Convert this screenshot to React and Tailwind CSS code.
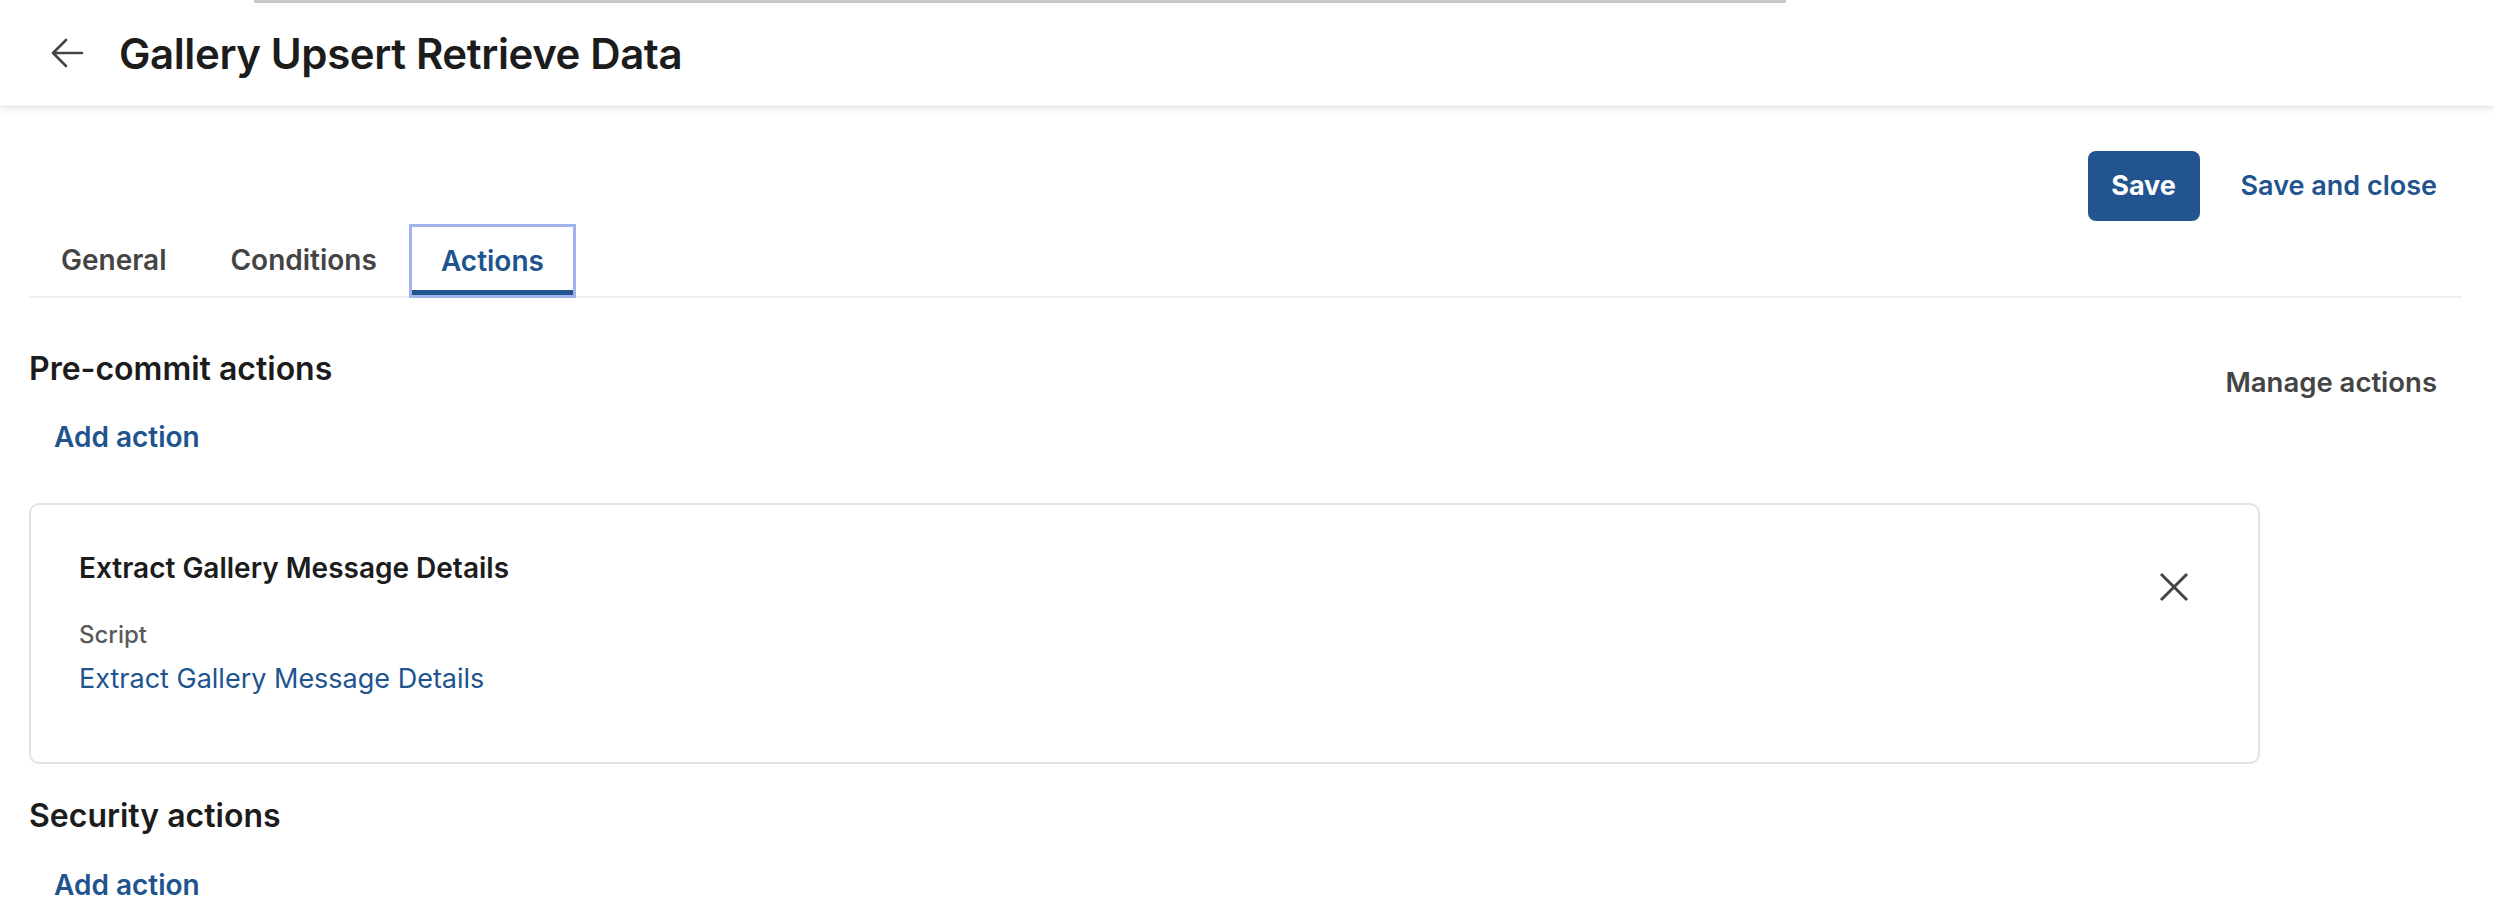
import { useState } from 'react';

function AddAction() {
  return (
    <button className="ml-[25px] text-[28px] font-semibold text-[#21538f] leading-none">Add action</button>
  );
}

export default function App() {
  const [onglet, setOnglet] = useState('Actions');
  const onglets = ['General', 'Conditions', 'Actions'];

  return (
    <div className="min-h-[922px] bg-white text-[#1c1c1c] font-['Inter',sans-serif]">
      <header className="relative h-[107px] flex items-center shadow-[0_3px_6px_rgba(0,0,0,0.08)] border-b border-[#e6e6e6]">
        <div className="absolute top-0 left-[254px] w-[1532px] h-[3px] bg-[#c8c8c8]" />
        <button className="ml-[50px] text-[#444]">
          <svg width="34" height="32" viewBox="0 0 34 32" fill="none" stroke="currentColor" strokeWidth="2.6" strokeLinecap="round" strokeLinejoin="round">
            <path d="M32 16H3M16 3L3 16l13 13" />
          </svg>
        </button>
        <h1 className="ml-[35px] text-[42px] font-semibold tracking-[-0.4px]">Gallery Upsert Retrieve Data</h1>
      </header>

      <main className="pl-[29px] pr-[32px]">
        <div className="flex justify-end items-center gap-[41px] pt-[44px] pr-[25px]">
          <button className="w-[112px] h-[70px] rounded-[8px] bg-[#22548f] text-white text-[27px] font-bold">Save</button>
          <button className="text-[27px] font-semibold text-[#21538f]">Save and close</button>
        </div>

        <div className="mt-[3px] flex border-b-2 border-[#eeeeee]">
          {onglets.map((o) => (
            <button
              key={o}
              onClick={() => setOnglet(o)}
              className={
                o === onglet
                  ? 'h-[74px] px-[29px] text-[28px] font-semibold text-[#21538f] border-[3px] border-[#a3b3ee] shadow-[inset_0_-5px_0_#22548f] -mb-[2px]'
                  : 'h-[72px] px-[32px] text-[28px] font-semibold text-[#444]'
              }
            >
              {o}
            </button>
          ))}
        </div>

        <section className="mt-[55px]">
          <div className="flex justify-between items-start">
            <h2 className="text-[32px] font-semibold leading-none">Pre-commit actions</h2>
            <button className="mt-[16px] mr-[25px] text-[27.5px] font-semibold text-[#444] leading-none">Manage actions</button>
          </div>
          <div className="mt-[26px]"><AddAction /></div>

          <div className="mt-[50px] w-[2231px] h-[261px] rounded-[10px] border-2 border-[#e3e3e3] pl-[48px] pr-[68px] pt-[49px] flex justify-between">
            <div>
              <div className="text-[28px] font-semibold leading-none">Extract Gallery Message Details</div>
              <div className="mt-[41px] text-[24px] font-medium text-[#5a5a5a] leading-none">Script</div>
              <a href="#" className="block mt-[18px] text-[27px] text-[#21538f] leading-none">Extract Gallery Message Details</a>
            </div>
            <button className="mt-[17px] h-[32px] text-[#444]">
              <svg width="32" height="32" viewBox="0 0 32 32" fill="none" stroke="currentColor" strokeWidth="3">
                <path d="M3 3l26 26M29 3L3 29" />
              </svg>
            </button>
          </div>
        </section>

        <section className="mt-[36px]">
          <h2 className="text-[32px] font-semibold leading-none">Security actions</h2>
          <div className="mt-[39px]"><AddAction /></div>
        </section>
      </main>
    </div>
  );
}
